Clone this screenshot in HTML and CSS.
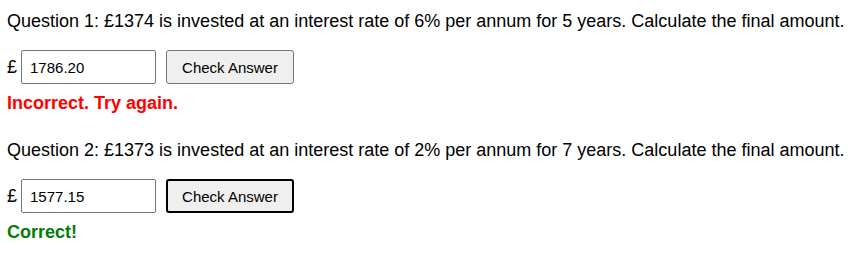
FILE: index.html
```html
<!DOCTYPE html>
<html lang="en">
<head>
<meta charset="UTF-8">
<meta name="viewport" content="width=device-width, initial-scale=1.0">
<title>Compound Interest Questions</title>
<link rel="stylesheet" href="styles.css">
</head>
<body>
<div class="question">
    <p class="question-text">Question 1: £1374 is invested at an interest rate of 6% per annum for 5 years. Calculate the final amount.</p>
    <div class="answer-row">
        <span class="currency">£</span>
        <input type="text" class="answer" value="1786.20">
        <button class="btn">Check Answer</button>
    </div>
    <p class="feedback incorrect">Incorrect. Try again.</p>
</div>
<div class="question">
    <p class="question-text">Question 2: £1373 is invested at an interest rate of 2% per annum for 7 years. Calculate the final amount.</p>
    <div class="answer-row">
        <span class="currency">£</span>
        <input type="text" class="answer" value="1577.15">
        <button class="btn btn-focus">Check Answer</button>
    </div>
    <p class="feedback correct">Correct!</p>
</div>
</body>
</html>
```
FILE: styles.css
```css
body {
    font-family: Arial, "Liberation Sans", sans-serif;
    font-size: 18px;
    margin: 0;
    padding: 11px 0 0 7px;
    color: #000;
    overflow: hidden;
}

.question {
    margin-bottom: 26px;
}

.question:last-child {
    margin-bottom: 0;
}

.question-text {
    margin: 0 0 18px 0;
    line-height: 21px;
    white-space: nowrap;
}

.answer-row {
    display: flex;
    align-items: center;
    height: 34px;
}

.currency {
    margin-right: 4px;
}

.answer {
    width: 135px;
    height: 34px;
    box-sizing: border-box;
    padding: 0 8px;
    font-family: Arial, "Liberation Sans", sans-serif;
    font-size: 15px;
    border: 1px solid #767676;
    border-radius: 2px;
    margin: 0 10px 0 0;
}

.btn {
    width: 128px;
    height: 34px;
    box-sizing: border-box;
    font-family: Arial, "Liberation Sans", sans-serif;
    font-size: 15px;
    background-color: #efefef;
    border: 1px solid #767676;
    border-radius: 3px;
    padding: 0;
    color: #000;
}

.btn-focus {
    border: 2px solid #000;
}

.feedback {
    margin: 9px 0 0 0;
    font-weight: bold;
    line-height: 21px;
}

.incorrect {
    color: #ff0000;
}

.correct {
    color: #008000;
}
```
